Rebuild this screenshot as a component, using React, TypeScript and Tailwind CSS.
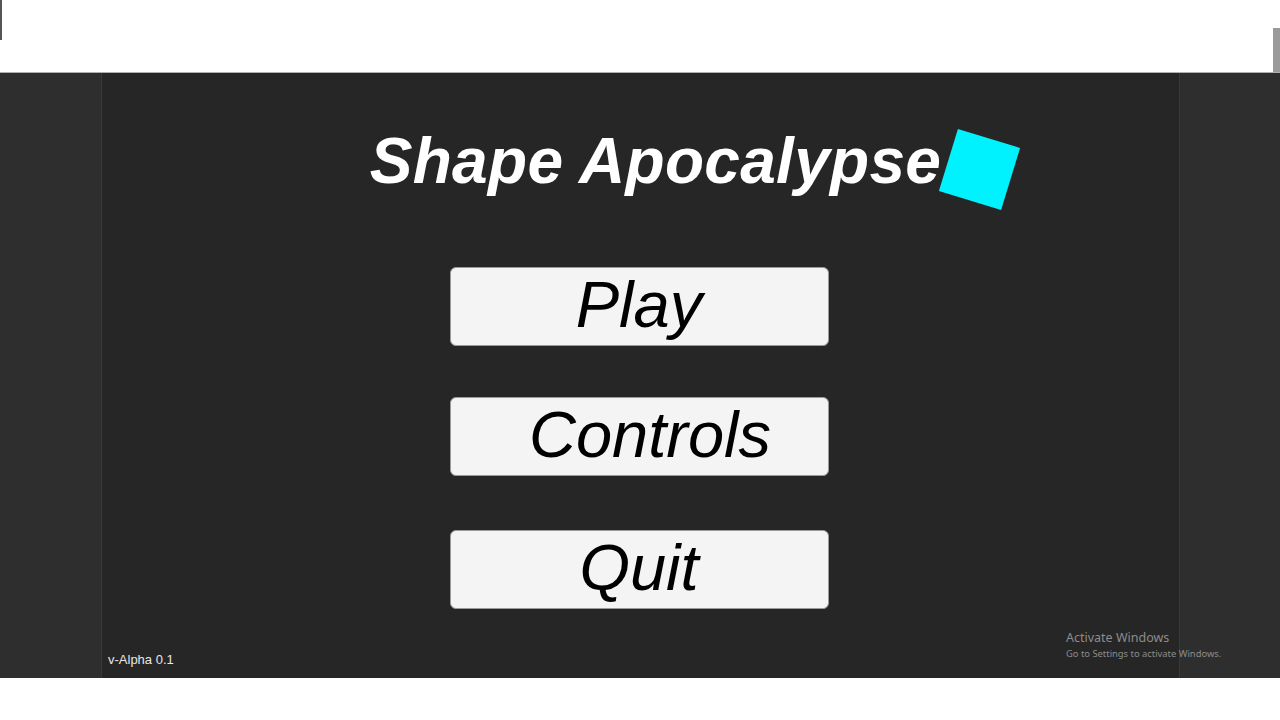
import React from "react";

const font = { fontFamily: '"Liberation Sans", Arial, sans-serif' };

function MenuButton({ label, shift = 0 }: { label: string; shift?: number }) {
  return (
    <button
      className="w-[379px] h-[79px] rounded-[6px] bg-[#f4f4f4] border border-[#9a9a9a] flex items-center justify-center pb-[4px] italic text-[65px] leading-none text-black"
      style={font}
    >
      <span style={{ marginLeft: shift }}>{label}</span>
    </button>
  );
}

export default function App() {
  return (
    <div className="w-[1280px] h-[720px] bg-white flex flex-col relative overflow-hidden" style={font}>
      <div className="h-[73px] bg-white border-b border-[#b0b0b0] relative">
        <div className="absolute left-0 top-0 w-[2px] h-[40px] bg-[#555]" />
        <div className="absolute right-0 top-[28px] w-[7px] h-[44px] bg-[#9a9a9a]" />
      </div>
      <div className="h-[605px] flex bg-[#2e2e2e]">
        <div className="w-[101px]" />
        <div className="flex-1 bg-[#262626] border-x border-[#383838] flex flex-col items-center relative">
          <div className="mt-[56px] pl-[30px] h-[64px]">
            <div className="relative">
              <h1 className="text-white font-bold italic text-[64px] leading-[64px] whitespace-nowrap tracking-[0.3px]">
                Shape Apocalypse
              </h1>
              <div className="absolute left-[577px] top-[8px] w-[65px] h-[65px] bg-[#00f2ff] rotate-[17deg]" />
            </div>
          </div>
          <div className="mt-[74px] mr-[3px]">
            <MenuButton label="Play" />
          </div>
          <div className="mt-[51px] mr-[3px]">
            <MenuButton label="Controls" shift={22} />
          </div>
          <div className="mt-[54px] mr-[3px]">
            <MenuButton label="Quit" />
          </div>
          <div className="absolute left-[6px] bottom-[9px] text-[13px] text-[#e6e6e6]">v-Alpha 0.1</div>
        </div>
        <div className="w-[100px]" />
      </div>
      <div className="flex-1 bg-white" />
      <div
        className="absolute left-[1066px] top-[630px] text-[#8c8c8c] leading-tight"
        style={{ fontFamily: '"Noto Sans", "Open Sans", sans-serif' }}
      >
        <div className="text-[12.5px]">Activate Windows</div>
        <div className="text-[9.4px] mt-[2px]">Go to Settings to activate Windows.</div>
      </div>
    </div>
  );
}
